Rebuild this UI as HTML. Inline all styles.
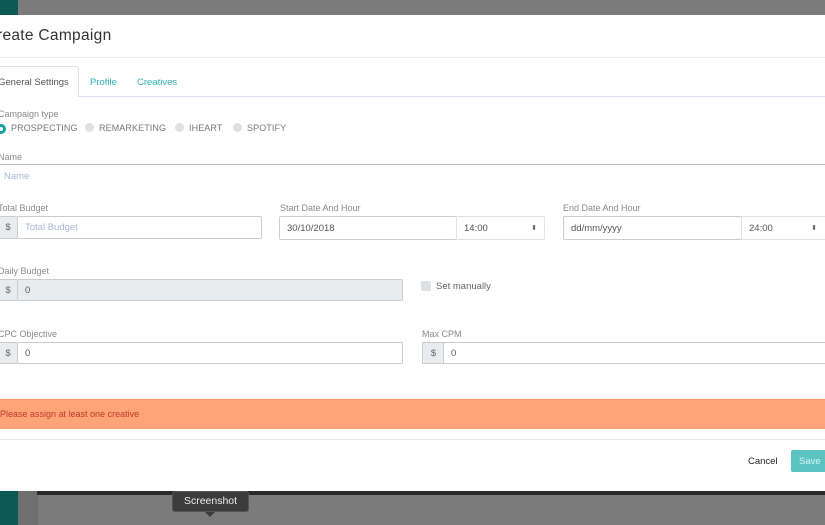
<!DOCTYPE html>
<html><head><meta charset="utf-8"><style>
*{box-sizing:border-box;margin:0;padding:0}
body{width:825px;height:525px;overflow:hidden;position:relative;background:#7b7b7c;font-family:"Liberation Sans",sans-serif;color:#555}
.a{position:absolute}
.lbl{position:absolute;font-size:9px;color:#8a8a8a}
.inp{position:absolute;border:1px solid #ccc;border-radius:2px;background:#fff;font-size:9.5px;padding-left:7px;display:flex;align-items:center;color:#555}
.add{position:absolute;background:#e9ecef;border:1px solid #ccc;border-right:none;font-size:9.5px;display:flex;align-items:center;justify-content:center;color:#666}
.radio{display:inline-block;width:9px;height:9px;border-radius:50%;background:#dde1e4;vertical-align:-1px;margin-right:5px}
.r{font-size:9px;color:#777;letter-spacing:0.1px}
</style></head><body>
<div class="a" style="left:0;top:0;width:18px;height:15px;background:#0d5a55"></div>
<div class="a" style="left:0;top:490px;width:18px;height:35px;background:#0d5a55"></div>
<div class="a" style="left:18px;top:490px;width:20px;height:35px;background:#6f6f70"></div>
<div class="a" style="left:37px;top:491px;width:788px;height:4px;background:#2a2a2a"></div>
<div class="a" style="left:0;top:15px;width:825px;height:476px;background:#fff"></div>
<div class="a" style="left:-3px;top:27px;font-size:15.5px;color:#333;letter-spacing:0.3px">reate Campaign</div>
<div class="a" style="left:0;top:57px;width:825px;height:1px;background:#eee"></div>
<div class="a" style="left:0;top:96px;width:825px;height:1px;background:#dde"></div>
<div class="a" style="left:-2px;top:66px;width:81px;height:31px;background:#fff;border:1px solid #dde;border-bottom:none;border-top-right-radius:3px"></div>
<div class="a" style="left:-2px;top:77px;font-size:9.5px;color:#555">General Settings</div>
<div class="a" style="left:90px;top:77px;font-size:9.5px;color:#2fb3b0">Profile</div>
<div class="a" style="left:137px;top:77px;font-size:9.5px;color:#2fb3b0">Creatives</div>
<div class="lbl" style="left:-2px;top:109px">Campaign type</div>
<div class="a" style="left:-4px;top:124px;width:10px;height:10px;border-radius:50%;border:3px solid #17a2a0;background:#fff"></div>
<div class="a r" style="left:11px;top:123px">PROSPECTING</div>
<div class="a r" style="left:85px;top:123px"><span class="radio"></span>REMARKETING</div>
<div class="a r" style="left:175px;top:123px"><span class="radio"></span>IHEART</div>
<div class="a r" style="left:233px;top:123px"><span class="radio"></span>SPOTIFY</div>
<div class="lbl" style="left:-2px;top:152px">Name</div>
<div class="a" style="left:0;top:164px;width:825px;height:1px;background:#bbb"></div>
<div class="a" style="left:4px;top:171px;font-size:9.5px;color:#a8b8d0">Name</div>
<div class="lbl" style="left:-2px;top:203px">Total Budget</div>
<div class="add" style="left:-2px;top:216px;width:19px;height:23px">$</div>
<div class="inp" style="left:17px;top:216px;width:245px;height:23px;color:#a8b8d0">Total Budget</div>
<div class="lbl" style="left:280px;top:203px">Start Date And Hour</div>
<div class="inp" style="left:279px;top:216px;width:178px;height:24px">30/10/2018</div>
<div class="inp" style="left:456px;top:216px;width:89px;height:24px;border-color:#e2e2e2">14:00<span style="position:absolute;right:7px;font-size:7px">⬍</span></div>
<div class="lbl" style="left:563px;top:203px">End Date And Hour</div>
<div class="inp" style="left:563px;top:216px;width:179px;height:24px">dd/mm/yyyy</div>
<div class="inp" style="left:741px;top:216px;width:90px;height:24px;border-color:#e2e2e2">24:00<span style="position:absolute;right:13px;font-size:7px">⬍</span></div>
<div class="lbl" style="left:-2px;top:266px">Daily Budget</div>
<div class="add" style="left:-2px;top:279px;width:19px;height:22px">$</div>
<div class="inp" style="left:17px;top:279px;width:386px;height:22px;background:#e9ecef">0</div>
<div class="a" style="left:421px;top:281px;width:10px;height:10px;border-radius:2px;background:#dde1e4"></div>
<div class="a" style="left:436px;top:281px;font-size:9.5px;color:#666">Set manually</div>
<div class="lbl" style="left:-2px;top:329px">CPC Objective</div>
<div class="add" style="left:-2px;top:342px;width:19px;height:22px">$</div>
<div class="inp" style="left:17px;top:342px;width:386px;height:22px">0</div>
<div class="lbl" style="left:422px;top:329px">Max CPM</div>
<div class="add" style="left:422px;top:342px;width:22px;height:22px">$</div>
<div class="inp" style="left:443px;top:342px;width:390px;height:22px">0</div>
<div class="a" style="left:0;top:399px;width:825px;height:30px;background:#ffa378;border-top:1px solid #f3956b"></div>
<div class="a" style="left:0;top:409px;font-size:9px;color:#c0392b">Please assign at least one creative</div>
<div class="a" style="left:0;top:439px;width:825px;height:1px;background:#e8e8e8"></div>
<div class="a" style="left:748px;top:456px;font-size:9.5px;color:#222">Cancel</div>
<div class="a" style="left:791px;top:450px;width:40px;height:22px;background:#5bc4c2;border-radius:2px;color:#d8f3f2;font-size:9.5px;padding:6px 0 0 8px">Save</div>
<div class="a" style="left:172px;top:491px;width:77px;height:21px;background:#3c3c3c;border:1px solid #555;border-radius:3px;color:#eee;font-size:10.5px;text-align:center;line-height:19px">Screenshot</div>
<div class="a" style="left:205px;top:512px;width:0;height:0;border-left:5px solid transparent;border-right:5px solid transparent;border-top:5px solid #3c3c3c"></div>
</body></html>
